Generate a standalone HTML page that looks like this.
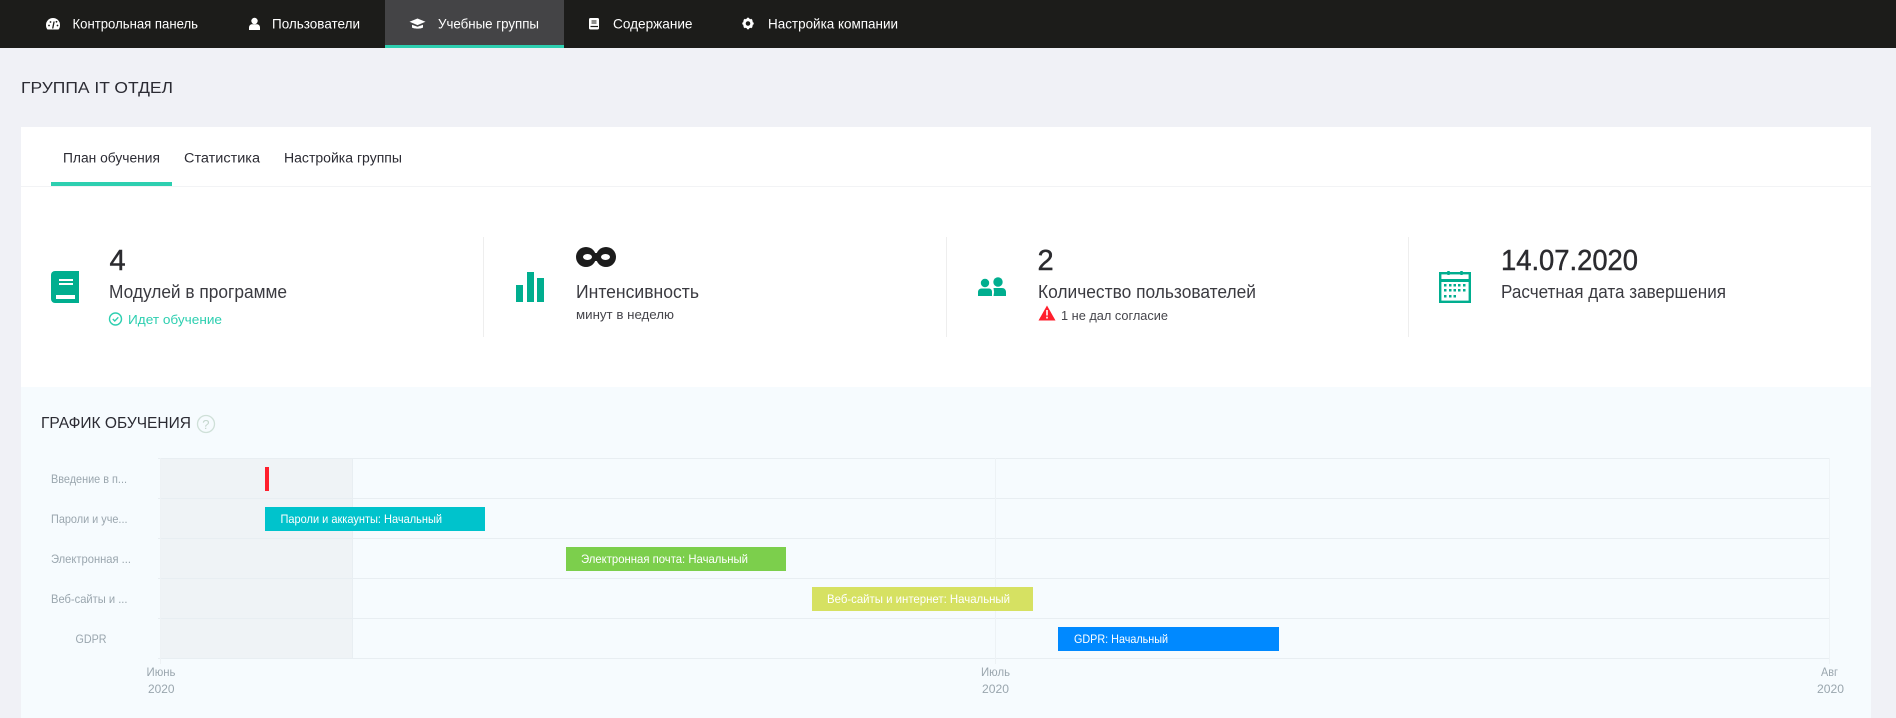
<!DOCTYPE html>
<html lang="ru">
<head>
<meta charset="utf-8">
<title>Группа IT отдел</title>
<style>
html,body{margin:0;padding:0;width:1896px;height:718px;overflow:hidden;background:#f0f1f6}
svg{display:block}
text{font-family:"Liberation Sans",sans-serif}
.nav{font-size:14px;fill:#fff}
.tab{font-size:13.5px;fill:#2b2b33}
.h{font-size:16px;fill:#2b2b33}
.num{font-size:29px;fill:#2b2b2f;stroke:#2b2b2f;stroke-width:.45px}
.lab{font-size:18px;fill:#3a3a40}
.sub{font-size:13px;fill:#45454b}
.row{font-size:12px;fill:#9aa6ae}
.bar{font-size:12px;fill:#fff}
.ax{font-size:12px;fill:#9aa6ae}
</style>
</head>
<body>
<svg xmlns="http://www.w3.org/2000/svg" width="1896" height="718" viewBox="0 0 1896 718">
  <rect width="1896" height="718" fill="#f0f1f6"/>

  <!-- top navigation -->
  <rect width="1896" height="48" fill="#1c1c1a"/>
  <rect x="385" width="179" height="48" fill="#444446"/>
  <rect x="385" y="45" width="179" height="3" fill="#2dcfb0"/>

  <path d="M46 25a7 7 0 0 1 14 0c0 2-.5 3.500-1.500 4.500h-11c-1-1-1.500-2.500-1.500-4.500z" fill="#fff"/>
  <path d="M52.800 28l1.200-6" stroke="#1c1c1a" stroke-width="1.300" stroke-linecap="round" fill="none"/>
  <g fill="#1c1c1a"><circle cx="49" cy="25.500" r=".9"/><circle cx="50.500" cy="22" r=".9"/><circle cx="56.500" cy="21.800" r=".9"/><circle cx="57.500" cy="25.500" r=".9"/></g>
  <text class="nav" x="72.500" y="28.500" textLength="125.500" lengthAdjust="spacingAndGlyphs">Контрольная панель</text>

  <circle cx="254.500" cy="21" r="3.200" fill="#fff"/>
  <path d="M249 30v-2.500c0-2 1.500-3.300 3-3.300h5c1.500 0 3 1.300 3 3.300v2.500z" fill="#fff"/>
  <text class="nav" x="272" y="28.500" textLength="88" lengthAdjust="spacingAndGlyphs">Пользователи</text>

  <path d="M417.500 18.500l8 3.300-8 3.300-8-3.300z" fill="#fff"/>
  <path d="M412 24.800v2.700c1.500 1.500 9.500 1.500 11 0v-2.700l-5.500 2z" fill="#fff"/>
  <text class="nav" x="438" y="28.500" textLength="101" lengthAdjust="spacingAndGlyphs">Учебные группы</text>

  <rect x="589" y="18" width="10" height="11.500" rx="1.500" fill="#fff"/>
  <path d="M591.500 21h5M591.500 23h5" stroke="#1c1c1a" stroke-width="1"/>
  <path d="M590.500 26.500h7.500" stroke="#1c1c1a" stroke-width="1.200"/>
  <text class="nav" x="613" y="28.500" textLength="79.500" lengthAdjust="spacingAndGlyphs">Содержание</text>

  <circle cx="748" cy="23.500" r="3.700" fill="none" stroke="#fff" stroke-width="2.800"/>
  <path d="M748 17.800v2M748 27.200v2M742.300 23.500h2M751.700 23.500h2M744 19.500l1.400 1.400M750.600 26.100l1.400 1.400M744 27.500l1.400-1.400M750.600 20.900l1.400-1.400" stroke="#fff" stroke-width="2"/>
  <text class="nav" x="768" y="28.500" textLength="130" lengthAdjust="spacingAndGlyphs">Настройка компании</text>

  <!-- page title -->
  <text class="h" x="21" y="93" textLength="152" lengthAdjust="spacingAndGlyphs">ГРУППА IT ОТДЕЛ</text>

  <!-- card -->
  <rect x="21" y="127" width="1850" height="591" fill="#fff"/>
  <text class="tab" x="63" y="162.500" textLength="97" lengthAdjust="spacingAndGlyphs">План обучения</text>
  <text class="tab" x="184" y="162.500" textLength="76" lengthAdjust="spacingAndGlyphs">Статистика</text>
  <text class="tab" x="284" y="162.500" textLength="118" lengthAdjust="spacingAndGlyphs">Настройка группы</text>
  <rect x="21" y="186" width="1850" height="1" fill="#f2f3f5"/>
  <rect x="51" y="182" width="121" height="4" fill="#2dcfb0"/>

  <!-- stat dividers -->
  <rect x="483" y="237" width="1" height="100" fill="#eeeeee"/>
  <rect x="946" y="237" width="1" height="100" fill="#eeeeee"/>
  <rect x="1408" y="237" width="1" height="100" fill="#eeeeee"/>

  <!-- stat 1 -->
  <path d="M55 271h24v32h-24a4 4 0 0 1-4-4v-24a4 4 0 0 1 4-4z" fill="#00ae8f"/>
  <path d="M59 280h14M59 284h14" stroke="#fff" stroke-width="2"/>
  <rect x="56" y="295" width="19" height="4" fill="#fff"/>
  <text class="num" x="109.500" y="270">4</text>
  <text class="lab" x="109" y="298" textLength="178" lengthAdjust="spacingAndGlyphs">Модулей в программе</text>
  <circle cx="115.500" cy="319" r="6" fill="none" stroke="#2dcfb0" stroke-width="1.400"/>
  <path d="M112.800 319l2 2 3.500-3.700" fill="none" stroke="#2dcfb0" stroke-width="1.400"/>
  <text class="sub" x="128" y="324" textLength="94" lengthAdjust="spacingAndGlyphs" style="fill:#2dcfb0">Идет обучение</text>

  <!-- stat 2 -->
  <rect x="516" y="285" width="7" height="17" fill="#00ae8f"/>
  <rect x="527" y="272" width="7" height="30" fill="#00ae8f"/>
  <rect x="537" y="278" width="7" height="24" fill="#00ae8f"/>
  <circle cx="586" cy="257" r="10" fill="#1c1c1c"/>
  <circle cx="606" cy="257" r="10" fill="#1c1c1c"/>
  <rect x="590" y="253" width="12" height="8" fill="#1c1c1c"/>
  <ellipse cx="587.500" cy="257" rx="4.500" ry="3" fill="#fff"/>
  <ellipse cx="605.500" cy="257" rx="4.500" ry="3" fill="#fff"/>
  <text class="lab" x="576" y="298" textLength="123" lengthAdjust="spacingAndGlyphs">Интенсивность</text>
  <text class="sub" x="576" y="319" textLength="98" lengthAdjust="spacingAndGlyphs">минут в неделю</text>

  <!-- stat 3 -->
  <circle cx="985" cy="283" r="4.200" fill="#00ae8f"/>
  <circle cx="998" cy="282" r="4.700" fill="#00ae8f"/>
  <path d="M978 296v-4c0-2 1.500-3.500 3.500-3.500h7.500c1.800 0 3 1.500 3 3.500v4z" fill="#00ae8f"/>
  <path d="M993.500 288h8.500c2.300 0 4 1.700 4 4v4h-12.500l.6-4z" fill="#00ae8f"/>
  <text class="num" x="1037.500" y="270">2</text>
  <text class="lab" x="1038" y="298" textLength="218" lengthAdjust="spacingAndGlyphs">Количество пользователей</text>
  <path d="M1047 305.500l8.500 15h-17z" fill="#ff1f2d"/>
  <path d="M1047 310v5.500M1047 316.800v1.700" stroke="#fff" stroke-width="1.600"/>
  <text class="sub" x="1061" y="320" textLength="107" lengthAdjust="spacingAndGlyphs">1 не дал согласие</text>

  <!-- stat 4 -->
  <rect x="1440.200" y="273.200" width="29.600" height="28.600" fill="none" stroke="#00ae8f" stroke-width="2.400"/>
  <rect x="1440" y="279" width="30" height="3" fill="#00ae8f"/>
  <rect x="1447" y="271" width="3" height="4" rx="1" fill="#00ae8f"/>
  <rect x="1460" y="271" width="3" height="4" rx="1" fill="#00ae8f"/>
  <g fill="#00ae8f">
    <rect x="1444" y="284" width="2.500" height="2.500"/><rect x="1449" y="284" width="2.500" height="2.500"/><rect x="1453.500" y="284" width="2.500" height="2.500"/><rect x="1458" y="284" width="2.500" height="2.500"/><rect x="1463" y="284" width="2.500" height="2.500"/>
    <rect x="1444" y="289" width="2.500" height="2.500"/><rect x="1449" y="289" width="2.500" height="2.500"/><rect x="1453.500" y="289" width="2.500" height="2.500"/><rect x="1458" y="289" width="2.500" height="2.500"/><rect x="1463" y="289" width="2.500" height="2.500"/>
    <rect x="1444" y="295" width="2.500" height="2.500"/><rect x="1449" y="295" width="2.500" height="2.500"/><rect x="1453.500" y="295" width="2.500" height="2.500"/>
  </g>
  <text class="num" x="1501" y="270" textLength="137" lengthAdjust="spacingAndGlyphs">14.07.2020</text>
  <text class="lab" x="1501" y="298" textLength="225" lengthAdjust="spacingAndGlyphs">Расчетная дата завершения</text>

  <!-- chart section -->
  <rect x="21" y="387" width="1850" height="331" fill="#f6fbfe"/>
  <text class="h" x="41" y="428" textLength="150" lengthAdjust="spacingAndGlyphs">ГРАФИК ОБУЧЕНИЯ</text>
  <circle cx="206" cy="424" r="8.500" fill="none" stroke="#cfe0d8" stroke-width="1.300"/>
  <text x="202.300" y="429" style="font-size:13px;fill:#c4d6cd">?</text>

  <rect x="160" y="458" width="192.500" height="200" fill="#eff3f6"/>
  <g fill="#e8eef2">
    <rect x="158" y="458" width="1671" height="1"/>
    <rect x="158" y="498" width="1671" height="1"/>
    <rect x="158" y="538" width="1671" height="1"/>
    <rect x="158" y="578" width="1671" height="1"/>
    <rect x="158" y="618" width="1671" height="1"/>
    <rect x="158" y="658" width="1671" height="1"/>
    <rect x="352" y="458" width="1" height="200"/>
    <rect x="995" y="458" width="1" height="206" fill="#edf2f5"/>
  </g>
  <rect x="160" y="458" width="1" height="206" fill="#eef2f5"/>
  <rect x="1829" y="458" width="1" height="206" fill="#eef3f6"/>

  <text class="row" x="51" y="483" textLength="76" lengthAdjust="spacingAndGlyphs">Введение в п...</text>
  <text class="row" x="51" y="523" textLength="76.500" lengthAdjust="spacingAndGlyphs">Пароли и уче...</text>
  <text class="row" x="51" y="563" textLength="80" lengthAdjust="spacingAndGlyphs">Электронная ...</text>
  <text class="row" x="51" y="603" textLength="76.500" lengthAdjust="spacingAndGlyphs">Веб-сайты и ...</text>
  <text class="row" x="75.500" y="643" textLength="31" lengthAdjust="spacingAndGlyphs">GDPR</text>

  <rect x="265" y="467" width="4" height="24" fill="#ff1f2d"/>
  <rect x="265" y="507" width="220" height="24" fill="#00c3cc"/>
  <rect x="566" y="547" width="220" height="24" fill="#7ccf4c"/>
  <rect x="812" y="587" width="221" height="24" fill="#d6e162"/>
  <rect x="1058" y="627" width="221" height="24" fill="#0089ff"/>
  <text class="bar" x="280.500" y="523" textLength="161.500" lengthAdjust="spacingAndGlyphs">Пароли и аккаунты: Начальный</text>
  <text class="bar" x="581" y="563" textLength="167" lengthAdjust="spacingAndGlyphs">Электронная почта: Начальный</text>
  <text class="bar" x="827" y="603" textLength="183" lengthAdjust="spacingAndGlyphs">Веб-сайты и интернет: Начальный</text>
  <text class="bar" x="1074" y="643" textLength="94" lengthAdjust="spacingAndGlyphs">GDPR: Начальный</text>

  <text class="ax" x="146.500" y="676" textLength="29" lengthAdjust="spacingAndGlyphs">Июнь</text>
  <text class="ax" x="148" y="693" textLength="26.500" lengthAdjust="spacingAndGlyphs">2020</text>
  <text class="ax" x="981" y="676" textLength="29" lengthAdjust="spacingAndGlyphs">Июль</text>
  <text class="ax" x="982" y="693" textLength="27" lengthAdjust="spacingAndGlyphs">2020</text>
  <text class="ax" x="1821" y="676" textLength="17" lengthAdjust="spacingAndGlyphs">Авг</text>
  <text class="ax" x="1817" y="693" textLength="27" lengthAdjust="spacingAndGlyphs">2020</text>
</svg>
</body>
</html>
